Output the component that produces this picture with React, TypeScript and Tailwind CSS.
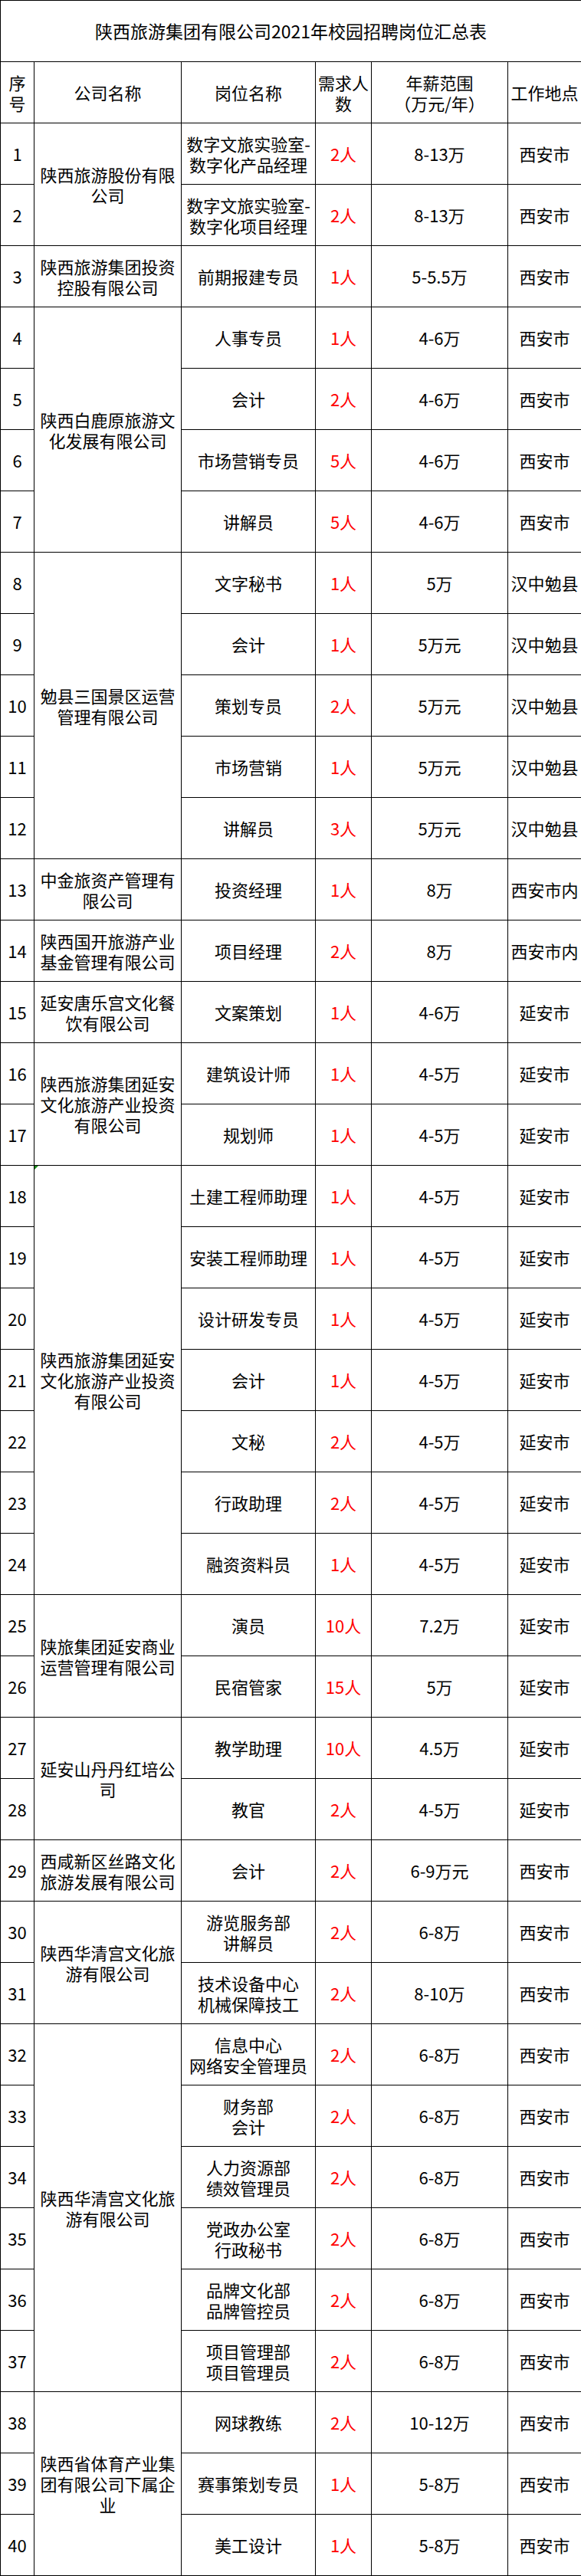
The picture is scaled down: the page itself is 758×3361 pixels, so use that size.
import React from "react";

type Job = { pos: string[]; num: string; salary: string; place: string };
type Group = { name: string[]; jobs: Job[]; mark?: boolean };

const j = (pos: string[], num: string, salary: string, place: string): Job => ({ pos, num, salary, place });

const yanan = ["陕西旅游集团延安", "文化旅游产业投资", "有限公司"];
const hqg = ["陕西华清宫文化旅", "游有限公司"];

const groups: Group[] = [
  {
    name: ["陕西旅游股份有限", "公司"],
    jobs: [
      j(["数字文旅实验室-", "数字化产品经理"], "2人", "8-13万", "西安市"),
      j(["数字文旅实验室-", "数字化项目经理"], "2人", "8-13万", "西安市"),
    ],
  },
  {
    name: ["陕西旅游集团投资", "控股有限公司"],
    jobs: [j(["前期报建专员"], "1人", "5-5.5万", "西安市")],
  },
  {
    name: ["陕西白鹿原旅游文", "化发展有限公司"],
    jobs: [
      j(["人事专员"], "1人", "4-6万", "西安市"),
      j(["会计"], "2人", "4-6万", "西安市"),
      j(["市场营销专员"], "5人", "4-6万", "西安市"),
      j(["讲解员"], "5人", "4-6万", "西安市"),
    ],
  },
  {
    name: ["勉县三国景区运营", "管理有限公司"],
    jobs: [
      j(["文字秘书"], "1人", "5万", "汉中勉县"),
      j(["会计"], "1人", "5万元", "汉中勉县"),
      j(["策划专员"], "2人", "5万元", "汉中勉县"),
      j(["市场营销"], "1人", "5万元", "汉中勉县"),
      j(["讲解员"], "3人", "5万元", "汉中勉县"),
    ],
  },
  { name: ["中金旅资产管理有", "限公司"], jobs: [j(["投资经理"], "1人", "8万", "西安市内")] },
  { name: ["陕西国开旅游产业", "基金管理有限公司"], jobs: [j(["项目经理"], "2人", "8万", "西安市内")] },
  { name: ["延安唐乐宫文化餐", "饮有限公司"], jobs: [j(["文案策划"], "1人", "4-6万", "延安市")] },
  {
    name: yanan,
    jobs: [
      j(["建筑设计师"], "1人", "4-5万", "延安市"),
      j(["规划师"], "1人", "4-5万", "延安市"),
    ],
  },
  {
    name: yanan,
    mark: true,
    jobs: [
      j(["土建工程师助理"], "1人", "4-5万", "延安市"),
      j(["安装工程师助理"], "1人", "4-5万", "延安市"),
      j(["设计研发专员"], "1人", "4-5万", "延安市"),
      j(["会计"], "1人", "4-5万", "延安市"),
      j(["文秘"], "2人", "4-5万", "延安市"),
      j(["行政助理"], "2人", "4-5万", "延安市"),
      j(["融资资料员"], "1人", "4-5万", "延安市"),
    ],
  },
  {
    name: ["陕旅集团延安商业", "运营管理有限公司"],
    jobs: [
      j(["演员"], "10人", "7.2万", "延安市"),
      j(["民宿管家"], "15人", "5万", "延安市"),
    ],
  },
  {
    name: ["延安山丹丹红培公", "司"],
    jobs: [
      j(["教学助理"], "10人", "4.5万", "延安市"),
      j(["教官"], "2人", "4-5万", "延安市"),
    ],
  },
  { name: ["西咸新区丝路文化", "旅游发展有限公司"], jobs: [j(["会计"], "2人", "6-9万元", "西安市")] },
  {
    name: hqg,
    jobs: [
      j(["游览服务部", "讲解员"], "2人", "6-8万", "西安市"),
      j(["技术设备中心", "机械保障技工"], "2人", "8-10万", "西安市"),
    ],
  },
  {
    name: hqg,
    jobs: [
      j(["信息中心", "网络安全管理员"], "2人", "6-8万", "西安市"),
      j(["财务部", "会计"], "2人", "6-8万", "西安市"),
      j(["人力资源部", "绩效管理员"], "2人", "6-8万", "西安市"),
      j(["党政办公室", "行政秘书"], "2人", "6-8万", "西安市"),
      j(["品牌文化部", "品牌管控员"], "2人", "6-8万", "西安市"),
      j(["项目管理部", "项目管理员"], "2人", "6-8万", "西安市"),
    ],
  },
  {
    name: ["陕西省体育产业集", "团有限公司下属企", "业"],
    jobs: [
      j(["网球教练"], "2人", "10-12万", "西安市"),
      j(["赛事策划专员"], "1人", "5-8万", "西安市"),
      j(["美工设计"], "1人", "5-8万", "西安市"),
    ],
  },
];

const cell = "border border-black h-[80px] p-0 text-center align-middle";

const Lines = ({ lines }: { lines: string[] }) => (
  <>
    {lines.map((l, i) => (
      <div key={i} className="whitespace-nowrap">
        {l}
      </div>
    ))}
  </>
);

export default function App() {
  let no = 0;
  return (
    <div className="bg-white w-[758px] text-black font-['Noto_Sans_CJK_SC','Noto_Sans',sans-serif] text-[22px] leading-[27px]">
      <table className="w-[758px] border-collapse table-fixed">
        <colgroup>
          <col className="w-[44px]" />
          <col className="w-[192px]" />
          <col className="w-[175px]" />
          <col className="w-[73px]" />
          <col className="w-[178px]" />
          <col className="w-[96px]" />
        </colgroup>
        <tbody>
          <tr>
            <td colSpan={6} className={`${cell} text-[23px]`}>
              陕西旅游集团有限公司2021年校园招聘岗位汇总表
            </td>
          </tr>
          <tr>
            <td className={cell}>
              <Lines lines={["序", "号"]} />
            </td>
            <td className={cell}>公司名称</td>
            <td className={cell}>岗位名称</td>
            <td className={cell}>
              <Lines lines={["需求人", "数"]} />
            </td>
            <td className={cell}>
              <Lines lines={["年薪范围", "（万元/年）"]} />
            </td>
            <td className={cell}>工作地点</td>
          </tr>
          {groups.map((g, gi) =>
            g.jobs.map((job, ji) => {
              no += 1;
              return (
                <tr key={`${gi}-${ji}`}>
                  <td className={cell}>{no}</td>
                  {ji === 0 && (
                    <td rowSpan={g.jobs.length} className={`${cell} relative`}>
                      {g.mark && (
                        <span className="absolute left-0 top-0 w-0 h-0 border-t-[5px] border-r-[5px] border-t-[#1a8a1a] border-r-transparent" />
                      )}
                      <Lines lines={g.name} />
                    </td>
                  )}
                  <td className={cell}>
                    <Lines lines={job.pos} />
                  </td>
                  <td className={`${cell} text-[#ff0000]`}>{job.num}</td>
                  <td className={cell}>{job.salary}</td>
                  <td className={cell}>{job.place}</td>
                </tr>
              );
            })
          )}
        </tbody>
      </table>
    </div>
  );
}
